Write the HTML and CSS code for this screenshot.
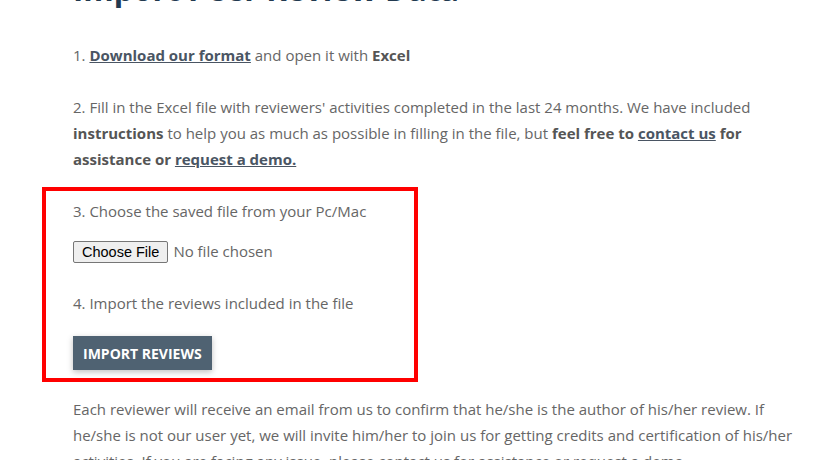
FILE: index.html
```html
<!DOCTYPE html>
<html lang="en">
<head>
<meta charset="utf-8">
<title>Import Peer Review Data</title>
<link rel="stylesheet" href="styles.css">
</head>
<body>
<main class="content">
  <h1 class="title">Import Peer Review Data</h1>
  <p class="step">1. <a href="#">Download our format</a> and open it with <strong>Excel</strong></p>
  <p class="step">2. Fill in the Excel file with reviewers' activities completed in the last 24 months. We have included <strong>instructions</strong> to help you as much as possible in filling in the file, but <strong>feel free to <a href="#">contact us</a> for assistance or <a href="#">request a demo.</a></strong></p>
  <section class="upload">
    <p class="step">3. Choose the saved file from your Pc/Mac</p>
    <input class="file" type="file">
    <p class="step step-import">4. Import the reviews included in the file</p>
    <button class="import-btn" type="button">IMPORT REVIEWS</button>
  </section>
  <p class="step">Each reviewer will receive an email from us to confirm that he/she is the author of his/her review. If he/she is not our user yet, we will invite him/her to join us for getting credits and certification of his/her activities. If you are facing any issue, please contact us for assistance or request a demo.</p>
</main>
</body>
</html>
```
FILE: styles.css
```css
html, body {
  margin: 0;
  padding: 0;
  background: #ffffff;
}
body {
  font-family: "Open Sans", "Liberation Sans", sans-serif;
  font-size: 15px;
  line-height: 26px;
  color: #666666;
}
.content {
  width: 730px;
  margin-left: 73px;
  padding-top: 1px;
  margin-top: -32px;
}
.title {
  margin: 0 0 33px;
  font-size: 31px;
  line-height: 40px;
  font-weight: 700;
  color: #22394f;
}
.step {
  margin: 0 0 26px;
}
.step strong {
  font-weight: 700;
  color: #555555;
}
.step a {
  color: #4a5563;
  font-weight: 700;
  text-decoration: underline;
}
.upload {
  margin: -11px 0 14px -31px;
  width: 341px;
  padding: 7px 0 2px 27px;
  border: 4px solid #ff0000;
}
.upload .step {
  margin-bottom: 17px;
}
.file {
  display: block;
  font-family: "Open Sans", "Liberation Sans", sans-serif;
  font-size: 15px;
  color: #666666;
  margin: 0 0 27px;
}
.file::file-selector-button {
  font-family: "Liberation Sans", Arial, sans-serif;
  font-size: 14.5px;
  color: #000000;
  background: #efefef;
  border: 1px solid #767676;
  border-radius: 2px;
  height: 22px;
  padding: 0 8px;
  margin-right: 5px;
}
.upload .step-import {
  margin-bottom: 20px;
}
.import-btn {
  display: block;
  margin: 0 0 6px;
  padding: 0 10px;
  height: 34px;
  background: #4f6272;
  color: #ffffff;
  border: none;
  font-family: "Open Sans", "Liberation Sans", sans-serif;
  font-weight: 700;
  font-size: 14px;
  box-shadow: 0 2px 6px rgba(0, 0, 0, 0.25);
}
```
